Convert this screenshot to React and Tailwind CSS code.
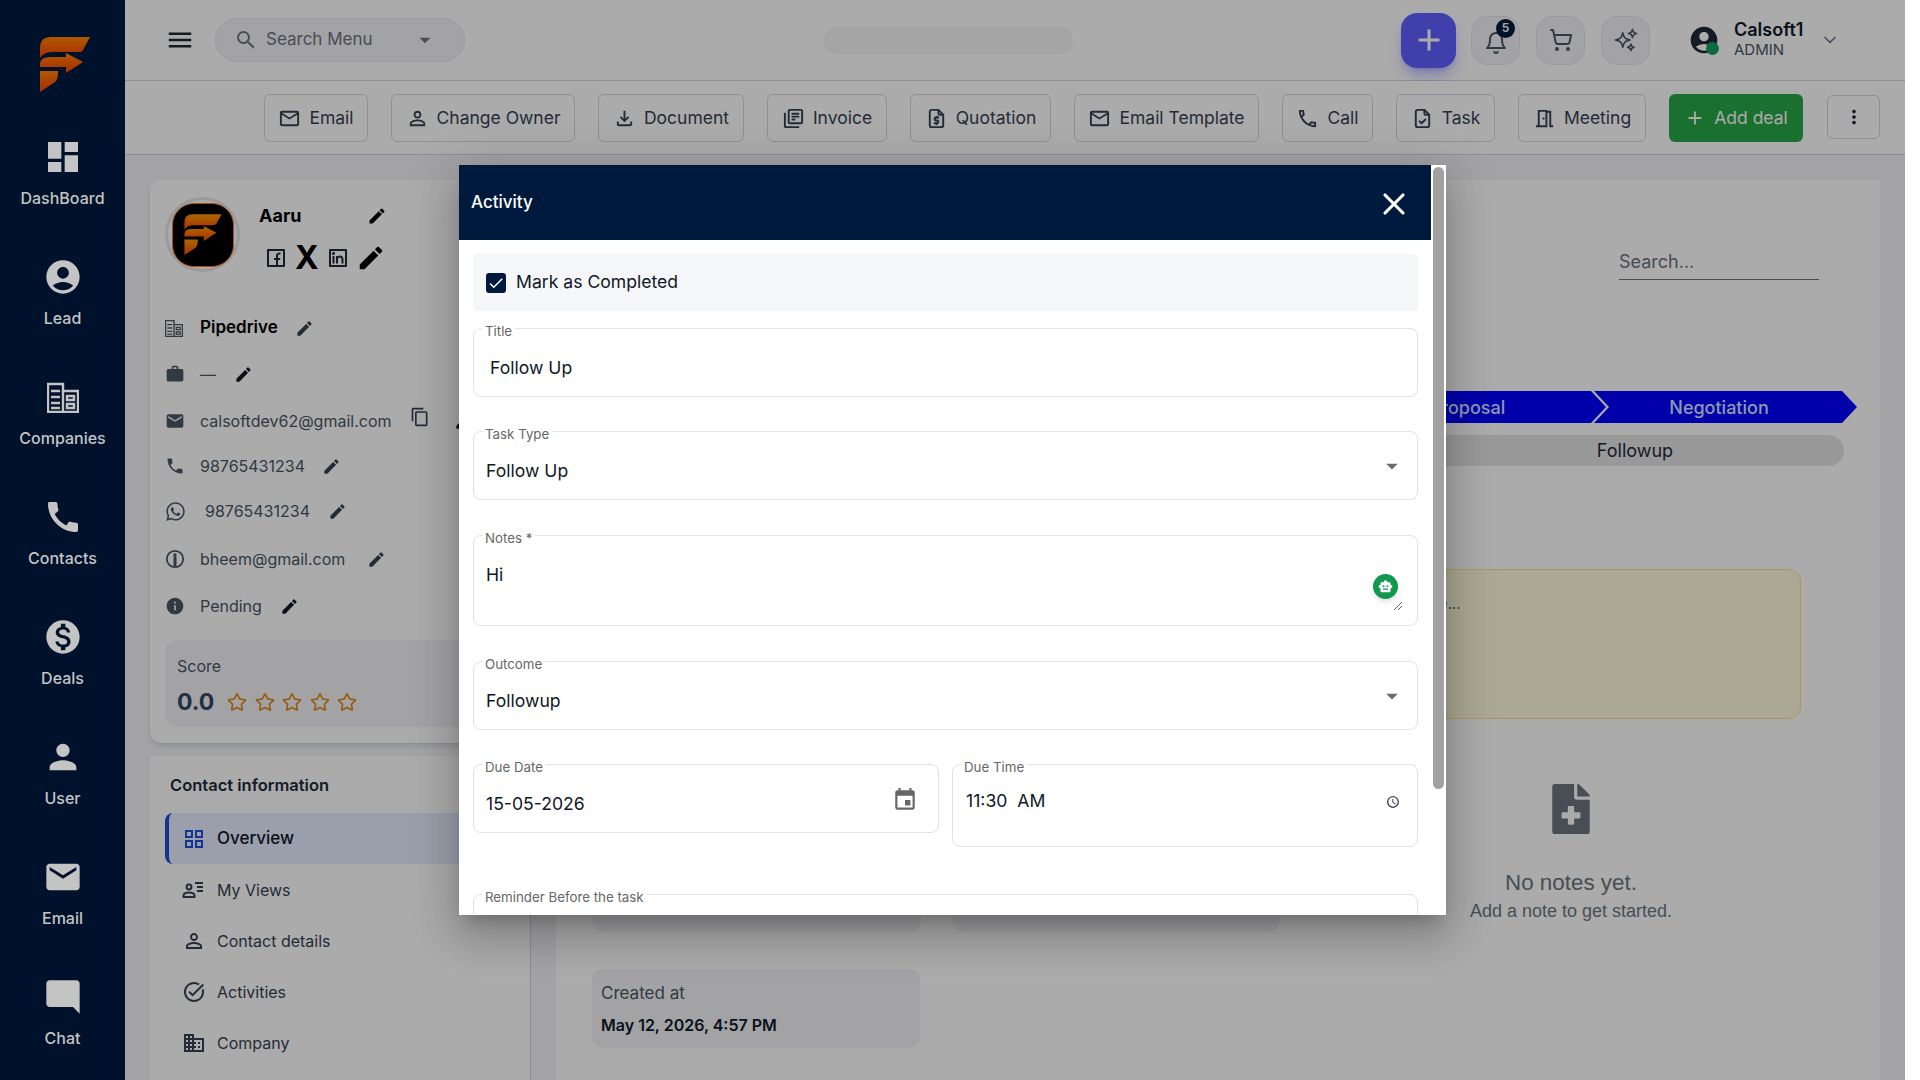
import {
  MdDashboard, MdAccountCircle, MdCall, MdMonetizationOn, MdPerson, MdEmail, MdModeComment, MdMenu, MdSearch,
  MdArrowDropDown, MdAdd, MdMailOutline, MdPersonOutline, MdOutlineFileDownload, MdOutlineLibraryBooks,
  MdOutlinePhone, MdOutlineMeetingRoom, MdMoreVert, MdEdit, MdWork, MdPhone, MdInfo, MdContentCopy, MdOutlineGridView,
  MdOutlineTaskAlt, MdBusiness, MdCheck, MdEvent, MdAccessTime, MdSmartToy,
} from "react-icons/md";
import { TbFileDollar, TbFileCheck } from "react-icons/tb";
import { LuBell, LuShoppingCart, LuChevronDown, LuX } from "react-icons/lu";
import { HiOutlineSparkles } from "react-icons/hi2";
import { RiFacebookBoxLine, RiLinkedinBoxLine } from "react-icons/ri";
import { FaWhatsapp, FaRegStar, FaFileMedical } from "react-icons/fa";

function Logo({ id, from, to, size }) {
  return (
    <svg width={size} height={size} viewBox="0 0 70 70">
      <defs>
        <linearGradient id={id} x1="0" y1="0" x2="0" y2="1">
          <stop offset="0" stopColor={from} />
          <stop offset="1" stopColor={to} />
        </linearGradient>
      </defs>
      <path fill={`url(#${id})`} d="M10 18Q10 7 21 7H60L53 20Q52 22 48 22H22Q14 22 10 28Z" />
      <path fill={`url(#${id})`} d="M10 33Q11 27 20 27H36V23L53 32L36 43V37H10Z" />
      <path fill={`url(#${id})`} d="M10 41H28V44Q28 49 25 52L10 62Z" />
    </svg>
  );
}

function BuildingIcon({ className, size }) {
  return (
    <svg width={size} height={size} viewBox="0 0 32 32" className={className} fill="none" stroke="currentColor" strokeWidth="2.4">
      <path d="M1 31V3H16V10H31V31Z" />
      <path d="M16 10V31M4 10H13M4 16H13M4 22H13M4 27H13M20 15H27V19H20ZM20 23H27V27H20Z" />
    </svg>
  );
}

function PersonCircleIcon() {
  return (
    <svg width="20" height="20" viewBox="0 0 20 20" fill="none" stroke="currentColor">
      <circle cx="10" cy="10" r="8.2" strokeWidth="1.8" />
      <circle cx="10" cy="6" r="1.7" fill="currentColor" stroke="none" />
      <path d="M10 8.5V16" strokeWidth="3" strokeLinecap="round" />
    </svg>
  );
}

function SidebarItem({ icon, label }) {
  return (
    <div className="flex h-[120px] shrink-0 flex-col items-center pt-[7px]">
      <div className="flex h-[40px] items-center justify-center text-[#c4c4c4]">{icon}</div>
      <div className="mt-[9px] text-[16px] leading-6 font-medium text-[#c4c4c4]">{label}</div>
    </div>
  );
}

function Sidebar() {
  return (
    <aside className="relative z-40 flex h-full w-[125px] shrink-0 flex-col overflow-hidden bg-[#00112b]">
      <div className="flex h-[130px] shrink-0 items-start justify-center pt-[30px] pl-[5px]">
        <Logo id="side-logo" from="#b05800" to="#a82c00" size={70} />
      </div>
      <SidebarItem label="DashBoard" icon={<MdDashboard size={40} />} />
      <SidebarItem label="Lead" icon={<MdAccountCircle size={40} />} />
      <SidebarItem label="Companies" icon={<BuildingIcon size={32} />} />
      <SidebarItem label="Contacts" icon={<MdCall size={40} />} />
      <SidebarItem label="Deals" icon={<MdMonetizationOn size={40} />} />
      <SidebarItem label="User" icon={<MdPerson size={40} />} />
      <SidebarItem label="Email" icon={<MdEmail size={40} />} />
      <SidebarItem label="Chat" icon={<MdModeComment size={40} />} />
    </aside>
  );
}

function IconBox({ children, className }) {
  return (
    <div className={"flex h-[49px] w-[49px] items-center justify-center rounded-2xl border border-gray-200 bg-gray-100 text-gray-600 " + className}>
      {children}
    </div>
  );
}

function TopBar() {
  return (
    <header className="flex h-[81px] shrink-0 items-center border-b border-gray-300 bg-white pl-[40px]">
      <MdMenu size={30} className="text-[#1f2937]" />
      <div className="ml-[20px] flex h-[44px] w-[250px] items-center rounded-full border border-gray-200 bg-gray-100 pl-[18px]">
        <MdSearch size={24} className="text-gray-500" />
        <span className="ml-[8px] text-[17px] text-gray-500">Search Menu</span>
        <MdArrowDropDown size={26} className="ml-[39px] text-gray-500" />
      </div>
      <div className="ml-[359px] h-[27px] w-[249px] rounded-full border border-[#f0f0f2] bg-[#f6f7f8]" />
      <button className="ml-[328px] flex h-[55px] w-[55px] items-center justify-center rounded-2xl bg-indigo-500 text-white shadow-lg shadow-indigo-500/40">
        <MdAdd size={36} />
      </button>
      <div className="relative ml-[15px]">
        <IconBox>
          <LuBell size={24} className="mt-[6px]" />
        </IconBox>
        <span className="absolute top-[3px] left-[25px] flex h-[19px] w-[19px] items-center justify-center rounded-full bg-[#001a3d] text-[12px] font-semibold text-white">5</span>
      </div>
      <IconBox className="ml-[16px]">
        <LuShoppingCart size={24} />
      </IconBox>
      <IconBox className="ml-[16px]">
        <HiOutlineSparkles size={26} />
      </IconBox>
      <div className="relative ml-[38px]">
        <MdAccountCircle size={32} className="text-[#1f2937]" />
        <span className="absolute right-[1px] bottom-[1px] h-[13px] w-[13px] rounded-full bg-[#10a060]" />
      </div>
      <div className="-mt-[3px] ml-[14px] flex flex-col">
        <span className="text-[18px] leading-[24px] font-semibold text-gray-900">Calsoft1</span>
        <span className="-mt-[2px] text-[15px] leading-[20px] text-gray-600">ADMIN</span>
      </div>
      <LuChevronDown size={20} className="ml-[17px] text-gray-500" />
    </header>
  );
}

function ActionButton({ icon, label, width }) {
  return (
    <button className={"flex h-[48px] shrink-0 items-center justify-center gap-[8px] rounded-md border border-gray-300 text-[17.5px] text-gray-700 " + width}>
      {icon}
      {label}
    </button>
  );
}

function ActionBar() {
  return (
    <div className="flex h-[74px] shrink-0 items-start justify-end gap-[23px] border-b border-gray-300 bg-white pt-[13px] pr-[25px]">
      <ActionButton width="w-[104px]" icon={<MdMailOutline size={23} />} label="Email" />
      <ActionButton width="w-[184px]" icon={<MdPersonOutline size={23} />} label="Change Owner" />
      <ActionButton width="w-[146px]" icon={<MdOutlineFileDownload size={23} />} label="Document" />
      <ActionButton width="w-[120px]" icon={<MdOutlineLibraryBooks size={23} />} label="Invoice" />
      <ActionButton width="w-[141px]" icon={<TbFileDollar size={23} />} label="Quotation" />
      <ActionButton width="w-[185px]" icon={<MdMailOutline size={23} />} label="Email Template" />
      <ActionButton width="w-[91px]" icon={<MdOutlinePhone size={23} />} label="Call" />
      <ActionButton width="w-[99px]" icon={<TbFileCheck size={23} />} label="Task" />
      <ActionButton width="w-[128px]" icon={<MdOutlineMeetingRoom size={23} />} label="Meeting" />
      <button className="flex h-[48px] w-[134px] shrink-0 items-center justify-center gap-[8px] rounded-md bg-[#28a745] text-[17.5px] text-white">
        <MdAdd size={22} />
        Add deal
      </button>
      <button className="mt-px ml-px flex h-[44px] w-[53px] shrink-0 items-center justify-center rounded-md border border-gray-300 text-gray-800">
        <MdMoreVert size={22} />
      </button>
    </div>
  );
}

function InfoRow({ icon, children, mt }) {
  return (
    <div className={"flex h-[40px] items-center text-[16px] text-gray-600 " + mt}>
      <span className="flex w-[35px] shrink-0 text-gray-600">{icon}</span>
      {children}
    </div>
  );
}

function Pencil({ ml, size = 19, dark }) {
  return <MdEdit size={size} className={"shrink-0 " + ml + (dark ? " text-gray-900" : " text-gray-700")} />;
}

function ProfileCard() {
  return (
    <section className="h-[563px] shrink-0 overflow-hidden rounded-xl bg-white pt-[17px] pl-[15px] shadow-md">
      <div className="flex">
        <div className="flex h-[75px] w-[75px] items-center justify-center rounded-full border-[3px] border-[#e6e6e6]">
          <div className="flex h-[64px] w-[62px] items-center justify-center rounded-[22px] border border-[#f97316] bg-black">
            <Logo id="avatar-logo" from="#ff9a00" to="#ff4a00" size={52} />
          </div>
        </div>
        <div className="ml-[19px] w-[130px]">
          <div className="mt-[5px] flex h-[27px] items-center text-[18px] font-bold text-black">
            Aaru
            <MdEdit size={20} className="ml-[66px] text-black" />
          </div>
          <div className="mt-[14px] flex items-center text-gray-800">
            <RiFacebookBoxLine size={24} className="ml-[5px]" />
            <span className="ml-[7px] text-[32px] leading-[24px] font-bold text-black">X</span>
            <RiLinkedinBoxLine size={24} className="ml-[7px]" />
            <MdEdit size={30} className="ml-[6px] text-black" />
          </div>
        </div>
      </div>
      <InfoRow mt="mt-[35px]" icon={<BuildingIcon size={18} className="text-gray-600" />}>
        <span className="text-[17px] font-semibold text-black">Pipedrive</span>
        <Pencil ml="ml-[17px]" />
      </InfoRow>
      <InfoRow mt="mt-[6px]" icon={<MdWork size={20} />}>
        <span>—</span>
        <Pencil ml="ml-[18px]" dark />
      </InfoRow>
      <InfoRow mt="mt-[7px]" icon={<MdEmail size={20} />}>
        <span>calsoftdev62@gmail.com</span>
        <MdContentCopy size={20} className="mt-[-8px] ml-[18px] shrink-0 text-gray-700" />
        <Pencil ml="ml-[24px]" dark />
      </InfoRow>
      <InfoRow mt="mt-[5px]" icon={<MdPhone size={20} />}>
        <span>98765431234</span>
        <Pencil ml="ml-[17px]" />
      </InfoRow>
      <InfoRow mt="mt-[5px]" icon={<FaWhatsapp size={21} />}>
        <span className="ml-[5px]">98765431234</span>
        <Pencil ml="ml-[18px]" />
      </InfoRow>
      <InfoRow mt="mt-[8px]" icon={<PersonCircleIcon />}>
        <span>bheem@gmail.com</span>
        <Pencil ml="ml-[22px]" />
      </InfoRow>
      <InfoRow mt="mt-[7px]" icon={<MdInfo size={20} />}>
        <span>Pending</span>
        <Pencil ml="ml-[18px]" dark />
      </InfoRow>
      <div className="mt-[14px] h-[87px] w-[351px] rounded-xl bg-gray-100 pt-[14px] pl-[12px]">
        <div className="text-[16px] leading-6 text-gray-600">Score</div>
        <div className="mt-[8px] flex items-center">
          <span className="text-[23px] leading-8 font-bold text-[#33466b]">0.0</span>
          <div className="ml-[13px] flex gap-[7.5px] text-[#e08a1e]">
            <FaRegStar size={20} />
            <FaRegStar size={20} />
            <FaRegStar size={20} />
            <FaRegStar size={20} />
            <FaRegStar size={20} />
          </div>
        </div>
      </div>
    </section>
  );
}

function NavRow({ icon, label, active }) {
  return (
    <div className={"ml-[15px] flex h-[51.2px] items-center rounded-l-lg " + (active ? "border-l-4 border-[#1d4ed8] bg-[#e6edff] pl-[13px] text-[17px] font-medium text-gray-900" : "pl-[17px] text-[16px] text-gray-700")}>
      <span className={"flex w-[35px] shrink-0 " + (active ? "text-[#1d4ed8]" : "text-gray-700")}>{icon}</span>
      {label}
    </div>
  );
}

function UserListIcon() {
  return (
    <svg width="22" height="22" viewBox="0 0 22 22" fill="none" stroke="currentColor" strokeWidth="2">
      <circle cx="7" cy="8" r="2.4" />
      <path d="M1.5 18v-1.5c0-2 3-3 5.5-3s5.5 1 5.5 3V18ZM13 4h8M15 8h6M15 12h6" />
    </svg>
  );
}

function ContactNav() {
  return (
    <section className="mt-[13px] flex-1 overflow-hidden border-r border-gray-300 bg-white pt-[17px]">
      <h3 className="ml-[20px] mb-[16px] text-[16.5px] leading-6 font-semibold text-gray-800">Contact information</h3>
      <NavRow active icon={<MdOutlineGridView size={24} />} label="Overview" />
      <NavRow icon={<UserListIcon />} label="My Views" />
      <NavRow icon={<MdPersonOutline size={24} />} label="Contact details" />
      <NavRow icon={<MdOutlineTaskAlt size={24} />} label="Activities" />
      <NavRow icon={<MdBusiness size={24} />} label="Company" />
    </section>
  );
}

function DetailPanel() {
  return (
    <section className="ml-[25px] flex flex-1 flex-col bg-white">
      <div className="mt-[65px] flex justify-end pr-[61px]">
        <div className="flex h-[35px] w-[200px] items-center border-b border-gray-500 pb-[2px] text-[18px] text-gray-500">Search...</div>
      </div>
      <div className="mt-[111px] flex justify-end pr-[23px] text-[18px] font-medium text-[#d5e2ff]">
        <div className="flex h-[32px] w-[262px] items-center justify-center bg-[#0000ff] pr-[15px] [clip-path:polygon(0_0,calc(100%-15px)_0,100%_50%,calc(100%-15px)_100%,0_100%,15px_50%)]">Proposal</div>
        <div className="-ml-[12px] flex h-[32px] w-[263px] items-center justify-center bg-[#0000ff] pr-[13px] [clip-path:polygon(0_0,calc(100%-15px)_0,100%_50%,calc(100%-15px)_100%,0_100%,15px_50%)]">Negotiation</div>
      </div>
      <div className="mt-[12px] flex justify-end pr-[36px]">
        <div className="flex h-[31px] w-[418px] items-center justify-center rounded-r-full bg-[#e4e4e4] text-[18px] text-gray-800">Followup</div>
      </div>
      <div className="mt-[103px] flex pl-[36px]">
        <div className="w-[688px]">
          <div className="mt-[284px] grid grid-cols-2 gap-x-[31px]">
            <div className="h-[79px] rounded-xl bg-gray-100" />
            <div className="h-[79px] rounded-xl bg-gray-100" />
          </div>
          <div className="mt-[37px] h-[79px] w-[328px] rounded-xl bg-gray-100 pt-[12px] pl-[9px]">
            <div className="text-[17px] leading-6 text-gray-600">Created at</div>
            <div className="mt-[8px] text-[16px] leading-6 font-semibold text-gray-900">May 12, 2026, 4:57 PM</div>
          </div>
        </div>
        <div className="ml-[61px] w-[460px]">
          <div className="h-[150px] rounded-xl border border-[#fde68a] bg-[#fffbdc] pt-[23px] pl-[20px] text-[15px] text-gray-500">Write a note...</div>
          <div className="mt-[65px] flex flex-col items-center text-[#6c757d] [font-family:'Liberation_Sans',sans-serif]">
            <FaFileMedical size={50} />
            <div className="mt-[34px] text-[22.4px] leading-[30px]">No notes yet.</div>
            <div className="text-[18px] leading-[26px]">Add a note to get started.</div>
          </div>
        </div>
      </div>
    </section>
  );
}

function Field({ label, height = "h-[69px]", className = "", children }) {
  return (
    <div className={"relative rounded-lg border-[1.5px] border-[#e2e2e2] bg-white " + height + " " + className}>
      <span className="absolute -top-[7.5px] left-[8px] bg-white px-[3px] text-[13.3px] leading-[18px] text-[#666]">{label}</span>
      {children}
    </div>
  );
}

function SelectValue({ value }) {
  return (
    <div className="flex items-start justify-between pr-[11px]">
      <span className="pt-[26px] pl-[12px] text-[17.6px] leading-[26px] text-gray-900">{value}</span>
      <MdArrowDropDown size={28} className="mt-[20px] text-[#6b6b6b]" />
    </div>
  );
}

function ActivityDialog() {
  return (
    <div className="absolute top-[165px] left-[334px] z-30 flex h-[750px] w-[987px] overflow-hidden bg-white shadow-[0_11px_15px_-7px_rgba(0,0,0,.2),0_24px_38px_3px_rgba(0,0,0,.14),0_9px_46px_8px_rgba(0,0,0,.12)]">
      <div className="w-[972px] shrink-0">
        <div className="flex h-[75px] items-center justify-between bg-[#001a3d] pr-[19px] pl-[12px] text-white">
          <span className="text-[17px] font-medium">Activity</span>
          <LuX size={36} strokeWidth={2.1} className="mt-[2px]" />
        </div>
        <div className="pt-[14px] pr-[13px] pl-[14px]">
          <div className="flex h-[57px] items-center rounded-sm bg-[#f5f6f8] pl-[13px]">
            <span className="flex h-[20px] w-[20px] items-center justify-center rounded-[3px] bg-[#001a3d] text-white">
              <MdCheck size={18} />
            </span>
            <span className="ml-[10px] text-[17.6px] text-gray-900">Mark as Completed</span>
          </div>
          <Field label="Title" className="mt-[17px]">
            <div className="pt-[26px] pl-[16px] text-[17.6px] leading-[26px] text-gray-900">Follow Up</div>
          </Field>
          <Field label="Task Type" className="mt-[34px]">
            <SelectValue value="Follow Up" />
          </Field>
          <Field label="Notes *" height="h-[91px]" className="mt-[35px]">
            <div className="pt-[26px] pl-[12px] text-[17.6px] leading-[26px] text-gray-900">Hi</div>
            <span className="absolute top-[38px] right-[19px] flex h-[25px] w-[25px] items-center justify-center rounded-full bg-[#10984f] text-white shadow-md">
              <MdSmartToy size={15} />
            </span>
            <svg width="10" height="10" viewBox="0 0 10 10" className="absolute right-[14px] bottom-[14px] text-[#666]" stroke="currentColor" fill="none">
              <path d="M1 9L9 1M5 9L9 5" />
            </svg>
          </Field>
          <Field label="Outcome" className="mt-[35px]">
            <SelectValue value="Followup" />
          </Field>
          <div className="mt-[34px] grid grid-cols-2 items-start gap-x-[13px]">
            <Field label="Due Date">
              <div className="flex items-start justify-between pr-[20px]">
                <span className="pt-[26px] pl-[12px] text-[17.6px] leading-[26px] text-gray-900">15-05-2026</span>
                <MdEvent size={26} className="mt-[22px] text-[#666]" />
              </div>
            </Field>
            <Field label="Due Time" height="h-[83px]">
              <div className="flex items-start justify-between pr-[17px]">
                <span className="pt-[23px] pl-[13px] text-[17.6px] leading-[26px] text-gray-900">11:30&nbsp; AM</span>
                <MdAccessTime size={14} className="mt-[30px] text-gray-800" />
              </div>
            </Field>
          </div>
          <Field label="Reminder Before the task" className="mt-[47px]" />
        </div>
      </div>
      <div className="w-[15px] shrink-0 pt-[2px] pl-[2px]">
        <div className="h-[622px] w-[11px] rounded-full bg-[#a1a1a1]" />
      </div>
    </div>
  );
}

export default function App() {
  return (
    <div className="flex h-screen w-full overflow-hidden bg-white [font-family:Inter,sans-serif]">
      <div className="relative flex h-full w-[1905px] shrink-0">
        <Sidebar />
        <main className="relative flex h-full w-[1780px] shrink-0 flex-col overflow-hidden bg-[#f3f4f6]">
          <TopBar />
          <ActionBar />
          <div className="flex min-h-0 flex-1 pt-[25px] pr-[25px] pl-[25px]">
            <div className="flex w-[381px] shrink-0 flex-col">
              <ProfileCard />
              <ContactNav />
            </div>
            <DetailPanel />
          </div>
          <div className="absolute inset-0 z-20 bg-black/33" />
          <ActivityDialog />
        </main>
      </div>
    </div>
  );
}
